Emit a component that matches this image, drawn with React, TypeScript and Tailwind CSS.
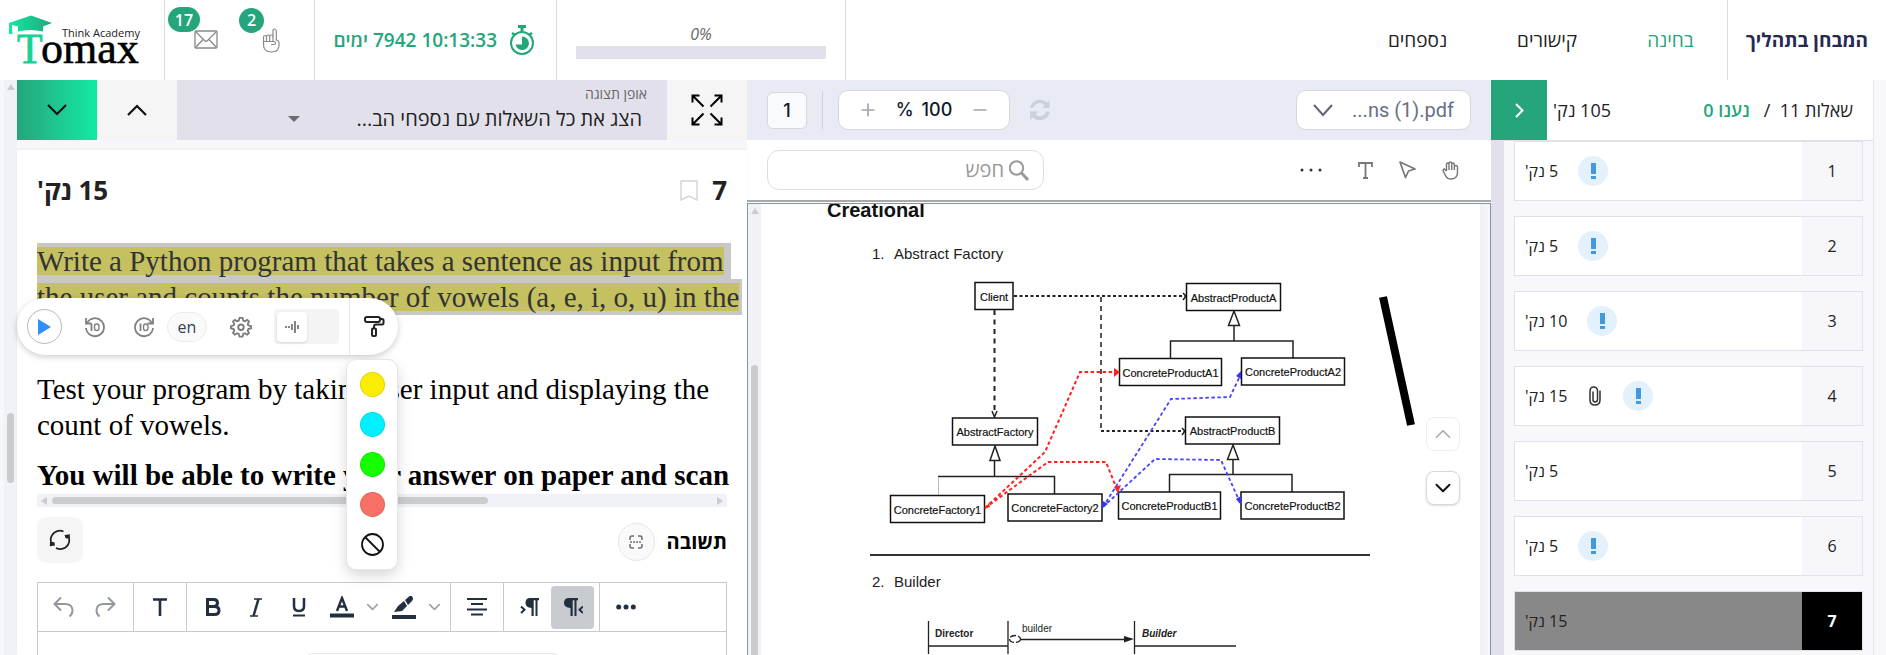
import type { ReactNode } from 'react';
import { ChevronDown, ChevronUp, Minus, Plus } from 'lucide-react';

const questions = [
    { id: 1, points: 5, alert: true, file: false },
    { id: 2, points: 5, alert: true, file: false },
    { id: 3, points: 10, alert: true, file: false },
    { id: 4, points: 15, alert: true, file: true },
    { id: 5, points: 5, alert: false, file: false },
    { id: 6, points: 5, alert: true, file: false },
    { id: 7, points: 15, alert: false, file: false },
];

const markers = [
    { name: 'Yellow', color: 'bg-[#f9ee00]' },
    { name: 'Cyan', color: 'bg-[#00f0ff]' },
    { name: 'Green', color: 'bg-[#15ff00]' },
    { name: 'Red', color: 'bg-[#f97066]' },
];

function Logo() {
    return (
        <svg className="overflow-visible" width="148" height="54" viewBox="0 14 148 54" aria-label="Tomax">
            <defs>
                <linearGradient id="cap" x1="0" x2="1">
                    <stop offset="0" stopColor="#0feaa5" />
                    <stop offset="1" stopColor="#24a57c" />
                </linearGradient>
            </defs>
            <path d="M9 24L31 16.500L52 24L43 27.500V32.500Q30 29.500 18 32.500V27.500L12 26V31L12.500 35H9Z" fill="url(#cap)" />
            <text x="17" y="64" fontSize="42" fontFamily="'Liberation Serif', serif" fill="#17d195" stroke="#17d195" strokeWidth="0.8">T</text>
            <text x="41" y="64" fontSize="44" fontFamily="'Liberation Serif', serif" fill="#000" stroke="#000" strokeWidth="0.6">omax</text>
            <text x="62" y="38" fontSize="11" fontFamily="'Open Sans', sans-serif" fill="#222">Think Academy</text>
        </svg>
    );
}

function EnvelopeIcon() {
    return (
        <svg width="24" height="20" viewBox="0 0 24 20" fill="none" stroke="#8a8a8a" strokeWidth="1.3">
            <rect x="1" y="1" width="22" height="17" rx="1" />
            <path d="M1.500 1.500L10.500 10.500Q12 12 13.500 10.500L22.500 1.500M1.500 17.500L9 9.500M22.500 17.500L15 9.500" />
        </svg>
    );
}

function FingerIcon() {
    return (
        <svg width="18" height="25" viewBox="0 0 18 25" fill="none" stroke="#8a8a8a" strokeWidth="1.2">
            <path d="M11 13V3Q11 1 12.700 1Q14.300 1 14.300 3V12Q17 12.500 17 15V17Q17 24 9.500 24Q1.500 24 1.500 16.500V9Q1.500 7.500 3 7.500Q4.500 7.500 4.500 9V13M4.500 9Q4.500 7 6 7Q7.700 7 7.700 9V13M7.700 9Q7.700 7 9.200 7Q11 7 11 9M1.500 12Q1.500 13.500 3 13.500H12Q13.500 13.500 13.500 15Q13.500 16.500 12 16.500H9" />
        </svg>
    );
}

function StopwatchIcon() {
    return (
        <svg width="26" height="31" viewBox="0 0 26 31" fill="none" stroke="#24a57c">
            <circle cx="13" cy="18" r="11" strokeWidth="2" />
            <path d="M9 1.500H17M13 1.500V7" strokeWidth="3" />
            <path d="M3 8L6 10M23 8L20 10" strokeWidth="2.500" />
            <path d="M13 11.500A6.800 6.800 0 1 1 6.500 19.500H13Z" fill="#24a57c" stroke="none" />
        </svg>
    );
}

function FullscreenIcon() {
    return (
        <svg width="32" height="32" viewBox="0 0 32 32" fill="none" stroke="#000" strokeWidth="2">
            <path d="M1.500 8.500V1.500H8.500M1.500 1.500L12.500 12.500M23.500 1.500H30.500V8.500M30.500 1.500L19.500 12.500M1.500 23.500V30.500H8.500M1.500 30.500L12.500 19.500M23.500 30.500H30.500V23.500M30.500 30.500L19.500 19.500" />
        </svg>
    );
}

function SkipIcon({ forward = false }: { forward?: boolean }) {
    return (
        <svg width="22" height="22" viewBox="0 0 22 22" fill="none" stroke="#808080" strokeWidth="1.800">
            {forward
                ? <path d="M19 7A9 9 0 1 0 20 12M20 2V7.500H14.500" />
                : <path d="M3 7A9 9 0 1 1 2 12M2 2V7.500H7.500" />}
            <path d="M7.500 7.500V15" />
            <rect x="10.500" y="8" width="4.500" height="6.500" rx="2.200" strokeWidth="1.400" />
        </svg>
    );
}

function GearIcon() {
    return (
        <svg width="22" height="22" viewBox="0 0 24 24" fill="none" stroke="#7b7b7b" strokeWidth="2" strokeLinejoin="round">
            <path d="M10.300 2H13.700L14.400 5L16.300 5.800L18.900 4.200L20.800 6.100L19.300 8.700L20 10.300L23 11V13.500L20 14.200L19.300 16L20.800 18.500L18.900 20.400L16.300 18.800L14.400 19.600L13.700 22.500H10.300L9.600 19.600L7.700 18.800L5.100 20.400L3.200 18.500L4.700 16L4 14.200L1 13.500V11L4 10.300L4.700 8.700L3.200 6.100L5.100 4.200L7.700 5.800L9.600 5Z" />
            <circle cx="12" cy="12.300" r="3" />
        </svg>
    );
}

function RollerIcon() {
    return (
        <svg width="21" height="23" viewBox="0 0 21 23" fill="none" stroke="#222" strokeWidth="2" strokeLinejoin="round">
            <rect x="1" y="2" width="15" height="5" rx="2" />
            <path d="M16 4H18Q19.500 4 19.500 5.500V8Q19.500 9.500 18 9.500H12Q10 9.500 10 11.500V13" />
            <rect x="8" y="13.500" width="4" height="7.500" rx="1" />
        </svg>
    );
}

function RefreshIcon() {
    return (
        <svg width="22" height="22" viewBox="0 0 22 22" fill="none" stroke="#222" strokeWidth="1.700">
            <path d="M2.500 15Q0 8 5.500 3.500Q10 .5 14.500 2.500M19.500 7Q22 14 16.500 18.500Q12 21.500 7 19" />
            <path d="M15.500 6L21 5.200L20.500 9.500Q18 9.800 16.500 9ZM1 12.800Q4 12.500 5.500 13.500L6 16.500L.8 17.200Z" fill="#222" stroke="none" />
        </svg>
    );
}

function SyncIcon() {
    return (
        <svg width="22" height="22" viewBox="0 0 22 22" fill="#ccd0d8">
            <path d="M1 9A10.200 10.200 0 0 1 18 3.500L20.500 1.300V9H12.800L15.500 6A6.500 6.500 0 0 0 4.500 9ZM21 12.500A10.200 10.200 0 0 1 4 18.500L1 20.500V12.500H9L6.500 15.500A6.500 6.500 0 0 0 17 12.500Z" />
        </svg>
    );
}

function ClipIcon() {
    return (
        <svg width="12" height="20" viewBox="0 0 12 20" fill="none" stroke="#333" strokeWidth="1.500" strokeLinecap="round">
            <path d="M11 5V14Q11 19 6 19Q1 19 1 14V5Q1 1 4.700 1Q8.500 1 8.500 5V13.500Q8.500 16 6.200 16Q4 16 4 13.500V6" />
        </svg>
    );
}

function Box({ x, y, w, label }: { x: number; y: number; w: number; label: string }) {
    return (
        <g>
            <rect x={x} y={y} width={w} height="27" fill="#fff" stroke="#111" strokeWidth="1.500" />
            <text x={x + w / 2} y={y + 18} textAnchor="middle" stroke="#111" strokeWidth="0.2">{label}</text>
        </g>
    );
}

function FactoryDiagram() {
    return (
        <svg className="block w-full" viewBox="761 266 719 280" fontFamily="'Liberation Sans', sans-serif" fontSize="11" fill="#111" stroke="none">
            <g stroke="#222" strokeWidth="1.500" fill="none">
                <path d="M1014 296H1186M1101 431H1185" strokeDasharray="3 2.500" strokeWidth="2" />
                <path d="M1101 297V431" strokeDasharray="5 4" strokeWidth="2" stroke="#555" />
                <path d="M994.500 310V412" strokeDasharray="5 4.500" strokeWidth="2" />
                <path d="M1183 293L1186 296L1183 300M1182 428L1185 431L1182 435M992 411L994.500 417L997 411" />
                <path d="M1234 326V341M1170.500 358V341H1293V358M1233 460V474.500M1169.500 492V474.500H1292V492M994.500 461V476M1054.500 494V476.500H938" />
                <path d="M938.500 477V495" stroke="#bbb" strokeWidth="1" />
                <path d="M1234 311L1239.500 325.500H1228.500ZM1233 445L1238.500 459.500H1227.500ZM995 446L1000 460.500H990Z" fill="#fff" />
            </g>
            <Box x={975} y={282.5} w={38} label="Client" />
            <Box x={952.5} y={418} w={85} label="AbstractFactory" />
            <Box x={890.5} y={495.5} w={94} label="ConcreteFactory1" />
            <Box x={1008} y={494} w={94} label="ConcreteFactory2" />
            <Box x={1186.5} y={283.5} w={94} label="AbstractProductA" />
            <Box x={1119.5} y={358.5} w={102} label="ConcreteProductA1" />
            <Box x={1241.5} y={358} w={103} label="ConcreteProductA2" />
            <Box x={1185.5} y={417} w={94} label="AbstractProductB" />
            <Box x={1118.5} y={492} w={102} label="ConcreteProductB1" />
            <Box x={1241} y={492} w={103} label="ConcreteProductB2" />
            <g fill="none" strokeWidth="1.800">
                <path d="M985 508L1045 452L1080 372H1115M985 508L1048 462H1106L1116 487" stroke="#f22" strokeDasharray="3.500 2.500" strokeWidth="2" />
                <path d="M1103 507L1171 399L1230 397L1239 378M1103 507L1155 459L1221 460L1238 498" stroke="#44f" strokeDasharray="3.500 2.500" />
            </g>
            <path d="M1114 368L1120 372L1114 377ZM1114 487L1118 493L1121 485ZM984 509L989 503L990 507Z" fill="#f22" />
            <path d="M1241 371V379L1236 376ZM1241 505V496L1236 499ZM1102 508L1103 501L1108 504Z" fill="#33f" />
            <path d="M1383 297L1411 425" stroke="#000" strokeWidth="8" />
        </svg>
    );
}

function BuilderDiagram() {
    return (
        <svg className="block w-full" viewBox="761 595 719 60" fontFamily="'Liberation Sans', sans-serif" fontSize="10" fill="#222">
            <path d="M928.500 622V660M1008 622V660M928.500 647H1008M1021 640.500H1126M1134.500 622V660M1134.500 647H1236" stroke="#222" strokeWidth="1.300" fill="none" />
            <ellipse cx="1015" cy="640" rx="5.500" ry="3.500" fill="#fff" stroke="#222" strokeWidth="1.300" strokeDasharray="6 2" />
            <path d="M1124 637L1134 640L1124 643.500Z" />
            <text x="935" y="638" fontWeight="bold">Director</text>
            <text x="1022" y="633">builder</text>
            <text x="1142" y="638" fontWeight="bold" fontStyle="italic">Builder</text>
        </svg>
    );
}

function Tool({ label, active = false, children }: { label: string; active?: boolean; children: ReactNode }) {
    return (
        <button
            type="button"
            aria-label={label}
            className={`flex h-[43px] w-[43px] items-center justify-center rounded text-[#222f3e] ${active ? 'bg-[#c8cbcf]' : ''}`}
        >
            {children}
        </button>
    );
}

function Pilcrow({ flip = false }: { flip?: boolean }) {
    return (
        <svg width="20" height="20" viewBox="0 0 20 20" fill="#222f3e">
            {flip ? (
                <>
                    <path d="M6 1H15V3.200H13.500V19H11.500V3.200H9.700V19H7.500V11Q1 10.500 1 6Q1 1 6 1Z" />
                    <path d="M20 9.500L16.500 12.700L20 16" fill="none" stroke="#222f3e" strokeWidth="2" />
                </>
            ) : (
                <>
                    <path d="M10 1H19V3.200H17.500V19H15.500V3.200H13.700V19H11.500V11Q5.500 10.500 5.500 6Q5.500 1 10 1Z" />
                    <path d="M1 9.500L4.500 12.700L1 16" fill="none" stroke="#222f3e" strokeWidth="2" />
                </>
            )}
        </svg>
    );
}

function Header() {
    return (
        <header className="flex h-20 shrink-0 bg-white">
            <a href="#home" className="flex w-[165px] items-center border-r border-[#dcdcdc]">
                <Logo />
            </a>
            <div className="flex w-[150px] items-center border-r border-[#dcdcdc] pl-[29px]">
                <button type="button" aria-label="הודעות" className="relative">
                    <EnvelopeIcon />
                    <span className="absolute -top-[23px] right-[18px] flex h-[25px] w-8 items-center justify-center rounded-full bg-[#24a57c] text-base font-semibold text-white">17</span>
                </button>
                <button type="button" aria-label="הרמת יד" className="relative ml-[44px]">
                    <FingerIcon />
                    <span className="absolute -top-5 right-4 flex h-[25px] w-[25px] items-center justify-center rounded-full bg-[#24a57c] text-base font-semibold text-white">2</span>
                </button>
            </div>
            <div className="flex w-[242px] items-center justify-end gap-3 border-r border-[#dcdcdc] pr-[21px]">
                <span dir="rtl" className="text-[19px] font-semibold whitespace-nowrap text-[#24a57c]">10:13:33 7942 ימים</span>
                <StopwatchIcon />
            </div>
            <div className="flex w-[289px] flex-col items-center border-r border-[#dcdcdc] px-[19px] pt-[22px]">
                <span className="text-base leading-6 text-[#666] italic">0%</span>
                <div role="progressbar" aria-valuenow={0} aria-label="0%" className="h-[13px] w-full bg-[#e2e1eb]" />
            </div>
            <nav dir="rtl" className="ml-auto flex text-[19px] text-[#222]">
                <h1 className="flex items-center border-l border-[#dcdcdc] px-[18px] font-bold text-[#262a50]">המבחן בתהליך</h1>
                <div className="flex items-center gap-[70px] pr-[33px] pl-[140px]">
                    <a href="#exam" className="text-[#24a57c]">בחינה</a>
                    <a href="#links">קישורים</a>
                    <a href="#appendix">נספחים</a>
                </div>
            </nav>
        </header>
    );
}

function ReaderBar() {
    return (
        <div className="absolute top-[148px] left-0 flex h-[57px] w-[381px] items-center rounded-full bg-white shadow-[0_2px_6px_rgba(0,0,0,0.2)]">
            <div className="flex h-full w-[55px] items-center rounded-xl pl-[10px]">
                <button type="button" aria-label="Play" className="flex h-[35px] w-[35px] items-center justify-center rounded-full border border-[#b8b8b8]">
                    <svg width="13" height="16" viewBox="0 0 13 16"><path d="M0 0L13 8L0 16Z" fill="#2e90fa" /></svg>
                </button>
            </div>
            <button type="button" aria-label="Back" className="ml-3"><SkipIcon /></button>
            <button type="button" aria-label="Forward" className="ml-[27px]"><SkipIcon forward /></button>
            <button type="button" className="ml-3 h-[30px] w-10 rounded-full border border-[#ececec] bg-[#fafafa] text-base leading-6 text-[#344054]">en</button>
            <button type="button" aria-label="Settings" className="ml-[23px]"><GearIcon /></button>
            <div className="ml-[22px] flex h-[35px] w-[65px] items-center rounded-sm bg-[#f4f4f4] pl-[3px]">
                <button type="button" aria-label="Wave" className="flex h-[30px] w-[30px] items-center justify-center rounded bg-white shadow">
                    <svg width="14" height="14" viewBox="0 0 14 14" stroke="#333" strokeWidth="1.200"><path d="M1 6V8M4 6V8M7 4V10M10 1V13M13 5V9" /></svg>
                </button>
            </div>
            <button type="button" aria-label="Marker" className="ml-[10px] flex h-full flex-1 items-center border-l border-[#e8e8e8] pl-[14px]"><RollerIcon /></button>
            <div className="absolute top-[61px] right-0 flex w-[52px] flex-col items-center gap-[15px] rounded-[10px] border border-[#e6e6e6] bg-white py-3 shadow-[0_6px_14px_rgba(0,0,0,0.15)]">
                {markers.map((marker) => (
                    <button key={marker.name} type="button" aria-label={marker.name} className={`h-[25px] w-[25px] rounded-full border border-black/10 ${marker.color}`} />
                ))}
                <button type="button" aria-label="Clear">
                    <svg width="25" height="25" viewBox="0 0 25 25" fill="none" stroke="#111" strokeWidth="1.800">
                        <circle cx="12.500" cy="12.500" r="10.500" />
                        <path d="M5 5L20 20" />
                    </svg>
                </button>
            </div>
        </div>
    );
}

function EditorToolbar() {
    return (
        <div className="flex h-[49px] items-center border-b border-[#cacaca]">
            <div className="flex h-full w-24 items-center border-r border-[#cacaca] pl-[3px]">
                <Tool label="Undo">
                    <svg width="22" height="22" viewBox="0 0 22 22" fill="none" stroke="#9198a0" strokeWidth="2"><path d="M9 1.500L2.500 8L9 14.500M2.500 8H14Q20.500 8.500 20.500 14.500Q20.500 18 17.500 20.500" /></svg>
                </Tool>
                <Tool label="Redo">
                    <svg width="22" height="22" viewBox="0 0 22 22" fill="none" stroke="#9198a0" strokeWidth="2"><path d="M13 1.500L19.500 8L13 14.500M19.500 8H8Q1.500 8.500 1.500 14.500Q1.500 18 4.500 20.500" /></svg>
                </Tool>
            </div>
            <div className="flex h-full w-[53px] items-center justify-center border-r border-[#cacaca]">
                <Tool label="Font">
                    <svg width="16" height="18" viewBox="0 0 16 18" fill="none" stroke="#222f3e" strokeWidth="2.600"><path d="M1 1.500H15M8 1.500V18" /></svg>
                </Tool>
            </div>
            <div className="flex h-full w-[264px] items-center border-r border-[#cacaca] pl-1">
                <Tool label="Bold">
                    <svg width="16" height="18" viewBox="0 0 16 18" fill="none" stroke="#222f3e" strokeWidth="3"><path d="M2.500 1.500H8.500Q12.500 1.500 12.500 5Q12.500 8.500 8.500 8.500H2.500M2.500 0V18M2.500 16.500H9.500Q14 16.500 14 12.500Q14 8.500 9.500 8.500" /></svg>
                </Tool>
                <Tool label="Italic">
                    <svg width="12" height="19" viewBox="0 0 12 19" fill="none" stroke="#222f3e" strokeWidth="1.400"><path d="M4 1H12M0 18H8" /><path d="M8.500 1L3.500 18" strokeWidth="2.500" /></svg>
                </Tool>
                <Tool label="Underline">
                    <svg width="14" height="19" viewBox="0 0 14 19" fill="none" stroke="#222f3e" strokeWidth="2.500"><path d="M2 0V8Q2 13 7 13Q12 13 12 8V0" /><path d="M1 17.500H13" strokeWidth="2" /></svg>
                </Tool>
                <Tool label="Text colour">
                    <svg width="24" height="22" viewBox="0 0 24 22" fill="none" stroke="#222f3e" strokeWidth="2.400"><path d="M7 15L12 2L17 15M8.500 10.500H15.500" /><path d="M0 19.500H24" strokeWidth="4" /></svg>
                </Tool>
                <button type="button" aria-label="Text colours" className="flex w-[19px] justify-center"><ChevronDown size={20} color="#9aa1a9" /></button>
                <Tool label="Highlight">
                    <svg width="24" height="24" viewBox="0 0 24 24" fill="#222f3e"><path d="M0 20H24V24H0ZM13 5L17 1.500Q19 0 20.500 2Q22 4 20 6L16 10ZM12 6L15 11L10 16L2 17L6 11Z" /></svg>
                </Tool>
                <button type="button" aria-label="Highlight colours" className="flex w-[19px] justify-center"><ChevronDown size={20} color="#9aa1a9" /></button>
            </div>
            <div className="flex h-full w-[53px] items-center justify-center border-r border-[#cacaca]">
                <Tool label="Align center">
                    <svg width="20" height="20" viewBox="0 0 20 20" stroke="#222f3e" strokeWidth="2"><path d="M0 2H20M4 7H16M0 12.500H20M4 17.500H16" /></svg>
                </Tool>
            </div>
            <div className="flex h-full w-24 items-center border-r border-[#cacaca] pl-1">
                <Tool label="Left to right"><Pilcrow /></Tool>
                <Tool label="Right to left" active><Pilcrow flip /></Tool>
            </div>
            <div className="flex h-full items-center pl-1">
                <Tool label="More">
                    <svg width="20" height="6" viewBox="0 0 20 6" fill="#222f3e"><circle cx="2.700" cy="3" r="2.500" /><circle cx="10" cy="3" r="2.500" /><circle cx="17.300" cy="3" r="2.500" /></svg>
                </Tool>
            </div>
        </div>
    );
}

function QuestionPanel() {
    return (
        <section className="flex min-w-0 bg-[#f7f7fb] pl-1">
            {/* Scroll track */}
            <div className="relative w-[13px] shrink-0 bg-[#f1f2f7]">
                <svg className="mt-1 ml-[3px]" width="8" height="6" viewBox="0 0 8 6"><path d="M0 6L4 0L8 6Z" fill="#cbccce" /></svg>
                <div className="absolute top-[333px] left-[3px] h-[70px] w-[7px] rounded-full bg-[#cbccce]" />
            </div>
            <div className="flex min-w-0 flex-1 flex-col">
                <div className="flex h-[60px] shrink-0">
                    <button type="button" aria-label="השאלה הבאה" className="flex w-20 items-center justify-center bg-linear-to-r from-[#24a57c] to-[#0feaa5]">
                        <svg width="20" height="12" viewBox="0 0 20 12" fill="none" stroke="#111" strokeWidth="2.200"><path d="M1 1L10 10L19 1" /></svg>
                    </button>
                    <button type="button" aria-label="השאלה הקודמת" className="flex w-20 items-center justify-center bg-[#f5f5f5]">
                        <svg width="20" height="12" viewBox="0 0 20 12" fill="none" stroke="#111" strokeWidth="2.200"><path d="M1 11L10 2L19 11" /></svg>
                    </button>
                    <div dir="rtl" className="min-w-0 flex-1 bg-[#e2e1eb] pt-[5px] pr-5">
                        <label htmlFor="view" className="block text-sm leading-[18px] text-[#666]">אופן תצוגה</label>
                        <div className="flex items-center gap-14 pr-[5px]">
                            <select id="view" className="h-8 appearance-none text-xl leading-8 text-[#222]">
                                <option>הצג את כל השאלות עם נספחי הב...</option>
                            </select>
                            <svg width="12" height="6" viewBox="0 0 12 6"><path d="M0 0H12L6 6Z" fill="#6b6b70" /></svg>
                        </div>
                    </div>
                    <button type="button" aria-label="מסך מלא" className="flex w-20 items-center justify-center bg-[#f5f5f5]"><FullscreenIcon /></button>
                </div>
                <div className="relative mt-[10px] flex min-h-0 flex-1 flex-col bg-white px-5 shadow-[0_-1px_2px_rgba(0,0,0,0.05)]">
                    <div className="mt-6 flex h-8 shrink-0 items-center text-[26px] font-bold text-[#222]">
                        <span dir="rtl">15 נק'</span>
                        <svg className="mr-[14px] ml-auto" width="18" height="21" viewBox="0 0 18 21" fill="none" stroke="#d0d5dd" strokeWidth="1.400"><path d="M1 1H17V20L9 16L1 20Z" /></svg>
                        <span>7</span>
                    </div>
                    <div className="-mr-4 mt-[37px] h-[251px] shrink-0 overflow-hidden font-['Liberation_Serif',serif] text-[29px] leading-9 whitespace-nowrap text-black">
                        <p className="mb-14 flex flex-col items-start text-[#333]">
                            <span className="flex h-9 items-center bg-[#c8c8c8] pr-[7px]"><span className="h-7 bg-[#c5c161] leading-7">Write a Python program that takes a sentence as input from</span></span>
                            <span className="flex h-9 items-center bg-[#c8c8c8] pr-[3px]"><span className="h-7 bg-[#c5c161] leading-7">the user and counts the number of vowels (a, e, i, o, u) in the</span></span>
                        </p>
                        <p className="mb-[14px]">Test your program by taking user input and displaying the<br />count of vowels.</p>
                        <p className="font-bold">You will be able to write your answer on paper and scan</p>
                    </div>
                    <div className="flex h-[13px] shrink-0 items-center bg-[#f1f2f7] px-1">
                        <svg width="6" height="8" viewBox="0 0 6 8"><path d="M6 0V8L0 4Z" fill="#cbccce" /></svg>
                        <div className="ml-[5px] h-[7px] w-[436px] rounded-full bg-[#cbccce]" />
                        <svg className="ml-auto" width="6" height="8" viewBox="0 0 6 8"><path d="M0 0V8L6 4Z" fill="#cbccce" /></svg>
                    </div>
                    <div className="mt-[10px] flex h-[46px] shrink-0 items-center">
                        <button type="button" aria-label="איפוס תשובה" className="flex h-[46px] w-[46px] items-center justify-center rounded-[10px] bg-[#f5f5f5]"><RefreshIcon /></button>
                        <button type="button" aria-label="סריקה" className="mt-1 mr-3 ml-auto flex h-[38px] w-[37px] items-center justify-center rounded-full border border-[#e6e6e6] bg-[#fafafa]">
                            <svg width="14" height="14" viewBox="0 0 14 14" fill="none" stroke="#667085" strokeWidth="1.500"><path d="M5 1H3Q1 1 1 3V5M9 1H11Q13 1 13 3V5M1 9V11Q1 13 3 13H5M13 9V11Q13 13 11 13H9" /><path d="M1 7H13" strokeDasharray="2 1" /></svg>
                        </button>
                        <h2 className="mt-1 text-xl font-bold text-black">תשובה</h2>
                    </div>
                    <div className="mt-[19px] min-h-0 flex-1 overflow-hidden border-x border-t border-[#cacaca]">
                        <EditorToolbar />
                        <div className="mt-[21px] ml-[267px] h-10 w-[256px] rounded-lg border border-[#e6e6e6]" />
                    </div>
                    <ReaderBar />
                </div>
            </div>
        </section>
    );
}

function PdfPanel() {
    return (
        <section className="flex min-w-0 flex-col bg-white">
            <div className="flex h-[60px] shrink-0 items-center bg-[#e8ebf4] px-5">
                <input aria-label="Page" defaultValue="1" className="h-[37px] w-10 rounded-md border border-[#d5d7dc] bg-[#f9fafc] text-center font-[Inter,sans-serif] text-lg font-medium text-[#101828]" />
                <div className="mx-[15px] h-[38px] w-px bg-[#cfd1d6]" />
                <div className="flex h-10 w-[172px] items-center justify-between rounded-[10px] border border-[#d5d7dc] bg-white px-[19px] font-[Inter,sans-serif] text-lg font-medium text-[#101828]">
                    <button type="button" aria-label="Zoom in"><Plus size={20} color="#a0a4ac" /></button>
                    <span className="flex gap-2"><span>%</span><span>100</span></span>
                    <button type="button" aria-label="Zoom out"><Minus size={20} color="#a0a4ac" /></button>
                </div>
                <button type="button" aria-label="Refresh" className="ml-[19px]"><SyncIcon /></button>
                <button type="button" className="ml-auto flex h-10 w-[175px] items-center justify-between rounded-[10px] border border-[#d5d7dc] bg-white px-4 font-[Roboto,sans-serif] text-xl text-[#667085]">
                    <svg width="20" height="13" viewBox="0 0 20 13" fill="none" stroke="#5d6475" strokeWidth="2"><path d="M1 1L10 11L19 1" /></svg>
                    <span>...ns (1).pdf</span>
                </button>
            </div>
            <div className="flex h-[60px] shrink-0 items-center px-5">
                <label dir="rtl" className="flex h-10 w-[277px] items-center gap-[5px] rounded-[12px] border border-[#dedede] pr-[14px]">
                    <svg width="20" height="21" viewBox="0 0 20 21" fill="none" stroke="#999"><circle cx="7.500" cy="8" r="6.700" strokeWidth="2" /><path d="M12.500 13L19 20" strokeWidth="3" /></svg>
                    <input aria-label="חפש" placeholder="חפש" className="w-40 text-xl placeholder:text-[#999]" />
                </label>
                <div className="ml-auto flex items-center pr-3 text-[#777]">
                    <button type="button" aria-label="More">
                        <svg width="23" height="4" viewBox="0 0 23 4" fill="#333"><circle cx="2" cy="2" r="1.500" /><circle cx="11" cy="2" r="1.500" /><circle cx="20" cy="2" r="1.500" /></svg>
                    </button>
                    <button type="button" aria-label="Text" className="ml-[35px]">
                        <svg width="15" height="17" viewBox="0 0 15 17" fill="none" stroke="#777" strokeWidth="1.800"><path d="M1 5V1H14V5M7.500 1V16M5 16H10" /></svg>
                    </button>
                    <button type="button" aria-label="Select" className="ml-[26px]">
                        <svg width="17" height="18" viewBox="0 0 17 18" fill="none" stroke="#777" strokeWidth="1.700" strokeLinejoin="round"><path d="M1 1L16 8L9.500 10L6.500 16.500Z" /></svg>
                    </button>
                    <button type="button" aria-label="Pan" className="ml-[26px]">
                        <svg width="17" height="19" viewBox="0 0 17 19" fill="none" stroke="#777" strokeWidth="1.400"><path d="M4.500 10V3.500Q4.500 2 5.700 2Q7 2 7 3.500V9M7 3Q7 1 8.300 1Q9.700 1 9.700 3V9M9.700 3.500Q9.700 2 11 2Q12.300 2 12.300 3.500V9M12.300 6Q12.300 4.500 13.700 4.500Q15.500 4.500 15.500 6V12Q15 18 9 18Q5 18 3.500 14.500L1 9.500Q1 8 2.500 8L4.500 10" /></svg>
                    </button>
                </div>
            </div>
            <div className="h-[3px] shrink-0 border-t-2 border-[#a8a8a8]" />
            <div className="relative flex min-h-0 flex-1 overflow-hidden border border-b-0 border-[#8494ab]">
                {/* Scroll track */}
                <div className="relative w-[13px] shrink-0 bg-[#f1f2f7]">
                    <svg className="mt-1 ml-[3px]" width="8" height="6" viewBox="0 0 8 6"><path d="M0 6L4 0L8 6Z" fill="#cbccce" /></svg>
                    <div className="absolute top-[161px] bottom-0 left-[3px] w-[7px] rounded-t-full bg-[#cbccce]" />
                </div>
                <article className="min-w-0 flex-1 font-['Liberation_Sans',sans-serif] text-[15px] leading-6 text-[#222]">
                    <h2 className="-mt-[6px] pl-[66px] text-xl leading-6 font-bold text-[#111]">Creational</h2>
                    <h3 className="mt-5 flex pl-[111px]"><span className="w-[22px]">1.</span>Abstract Factory</h3>
                    <FactoryDiagram />
                    <hr className="mt-2 mr-[110px] ml-[109px] border-t-2 border-[#333]" />
                    <h3 className="mt-[14px] flex pl-[111px]"><span className="w-[22px]">2.</span>Builder</h3>
                    <BuilderDiagram />
                </article>
                <div className="w-[10px] shrink-0 bg-linear-to-r from-[#eef0f5] to-[#f6f8fd]" />
                <div className="absolute top-[213px] right-[30px] flex flex-col gap-5">
                    <button type="button" aria-label="Previous page" className="flex h-[34px] w-[34px] items-center justify-center rounded-lg border border-[#eeeeee] bg-white"><ChevronUp size={26} strokeWidth={1.5} color="#aaa" /></button>
                    <button type="button" aria-label="Next page" className="flex h-[34px] w-[34px] items-center justify-center rounded-lg border border-[#d8d8d8] bg-white shadow-sm"><ChevronDown size={26} strokeWidth={1.8} color="#111" /></button>
                </div>
            </div>
        </section>
    );
}

function QuestionList() {
    return (
        <aside className="flex min-w-0 bg-[#f7f7fc]">
            <div className="flex min-w-0 flex-1 flex-col border-r border-[#e4e4ea]">
                <div className="flex h-[61px] shrink-0 items-center border-b border-[#e0e0e0] bg-white pr-5 text-lg text-[#222]">
                    <button type="button" aria-label="סגירת הרשימה" className="flex h-full w-14 items-center justify-center bg-[#24a57c]">
                        <svg width="9" height="15" viewBox="0 0 9 15" fill="none" stroke="#fff" strokeWidth="2"><path d="M1 1L7.500 7.500L1 14" /></svg>
                    </button>
                    <span dir="rtl" className="ml-[6px]">105 נק'</span>
                    <span dir="rtl" className="ml-auto whitespace-pre">שאלות 11 <span> / </span>  <b className="font-semibold text-[#24a57c]">נענו 0</b></span>
                </div>
                <div className="min-h-0 flex-1 overflow-hidden border-l-[13px] border-[#e2e1eb] px-[10px]">
                    <ul className="flex flex-col gap-[15px] text-base text-[#222]">
                        {questions.map((q) => (
                            <li key={q.id}>
                                <button type="button" className={`flex h-[60px] w-full items-center border border-[#e2e1e8] ${q.id === 7 ? 'bg-[#888]' : 'bg-white'}`}>
                                    <span dir="rtl" className="ml-[10px]">{q.points} נק'</span>
                                    {q.file && <span className="ml-[22px]"><ClipIcon /></span>}
                                    {q.alert && (
                                        <span className={`flex h-[30px] w-[30px] items-center justify-center rounded-full bg-[#e3f1fd] ${q.file ? 'ml-[22px]' : 'ml-5'}`}>
                                            <svg width="5" height="16" viewBox="0 0 5 16" fill="#4299e1"><path d="M0 0H5V11H0ZM0 13H5V16H0Z" /></svg>
                                        </span>
                                    )}
                                    <span className={`ml-auto flex h-full w-[60px] items-center justify-center ${q.id === 7 ? 'bg-black font-bold text-white' : 'bg-[#f6f6fb] font-medium'}`}>{q.id}</span>
                                </button>
                            </li>
                        ))}
                    </ul>
                </div>
            </div>
            <div className="w-3 shrink-0" />
        </aside>
    );
}

export default function App() {
    return (
        <div className="flex h-screen flex-col overflow-hidden bg-white font-['Open_Sans','Noto_Sans',sans-serif]">
            <Header />
            <main className="grid min-h-0 flex-1 grid-cols-[747fr_744fr_395px] grid-rows-[minmax(0,1fr)]">
                <QuestionPanel />
                <PdfPanel />
                <QuestionList />
            </main>
        </div>
    );
}
